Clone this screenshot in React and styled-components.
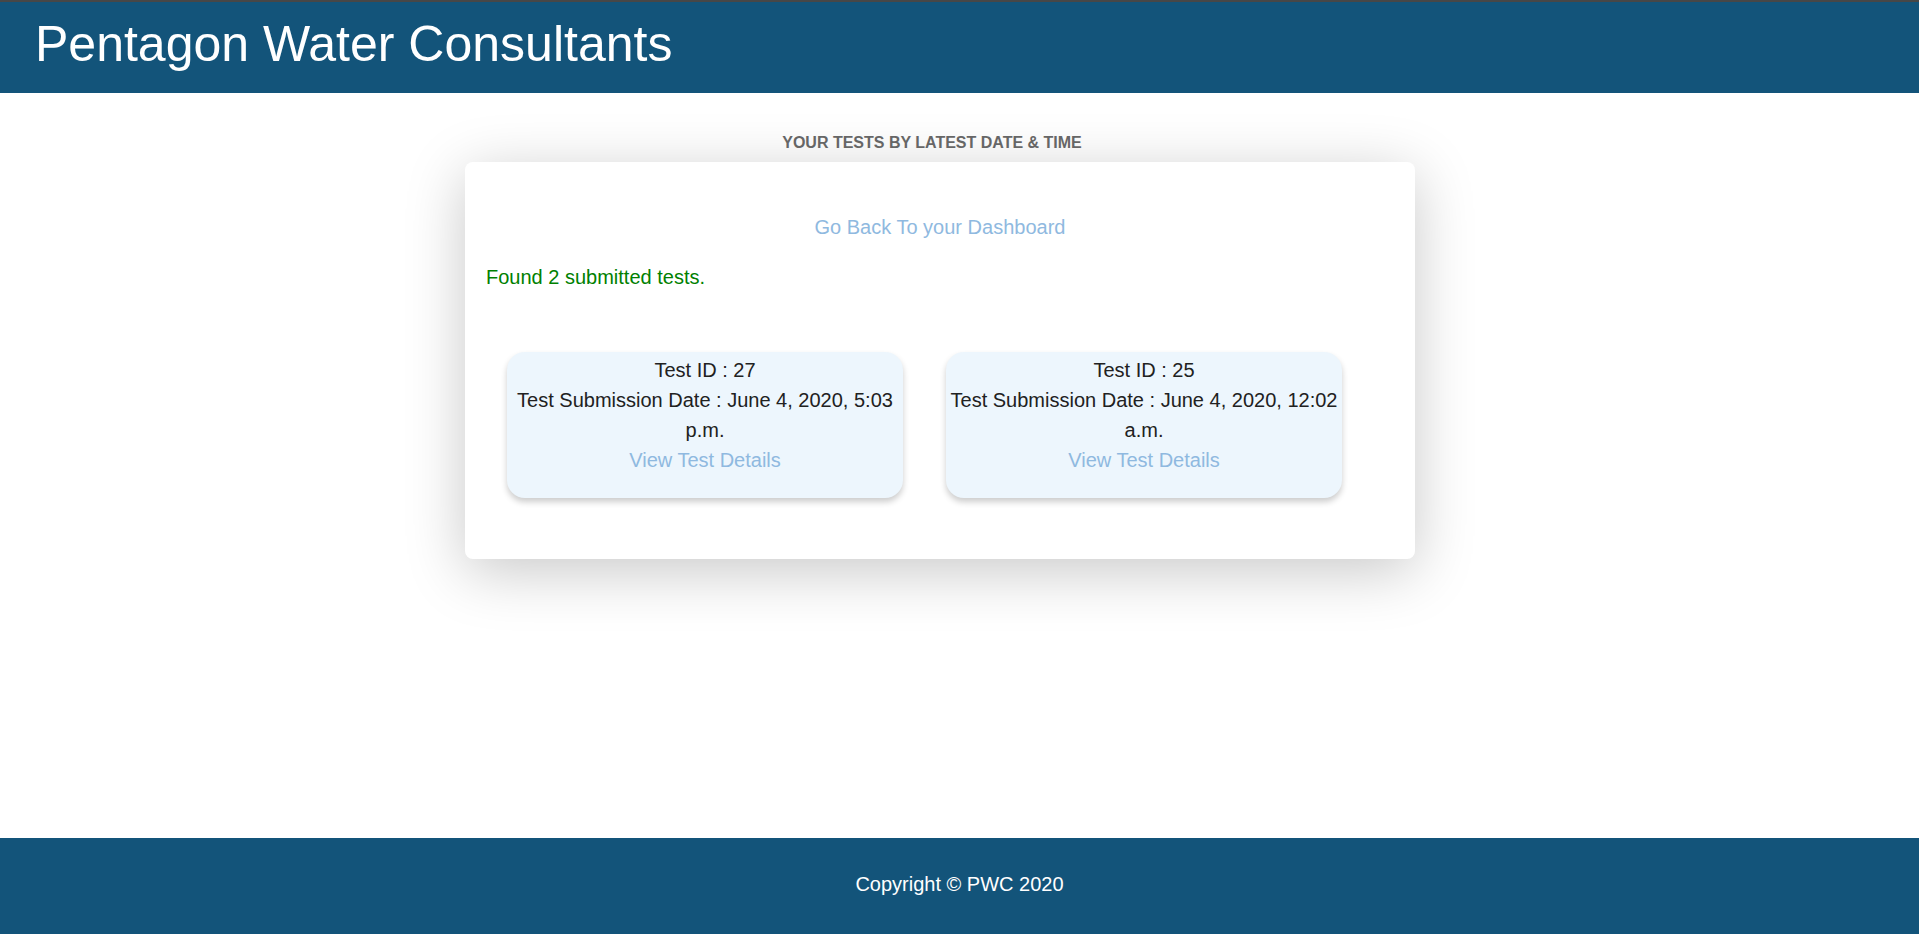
import styled, { createGlobalStyle } from "styled-components"

const GlobalStyle = createGlobalStyle`
  html, body {
    margin: 0;
    padding: 0;
    background: #ffffff;
    font-family: "Liberation Sans", Arial, sans-serif;
  }
  * {
    box-sizing: border-box;
  }
`

const tests = [
  { id: 27, date: "June 4, 2020, 5:03 p.m." },
  { id: 25, date: "June 4, 2020, 12:02 a.m." },
]

const Page = styled.div`
  min-height: 100vh;
  display: flex;
  flex-direction: column;
`

const Header = styled.header`
  background: #13547a;
  border-top: 2px solid #474747;
  height: 93px;
  display: flex;
  align-items: center;
  padding: 0 35px 8px;

  h1 {
    margin: 0;
    color: #ffffff;
    font-weight: 400;
    font-size: 50px;
  }
`

const Main = styled.main`
  flex: 1;
  padding: 41px 0 60px;
`

const Column = styled.section`
  width: 950px;
  margin-left: 465px;
`

const Title = styled.h2`
  margin: 0 0 10px;
  padding-right: 16px;
  text-align: center;
  font-size: 16px;
  line-height: 18px;
  font-weight: 700;
  color: #666666;
  text-transform: uppercase;
`

const Card = styled.div`
  background: #ffffff;
  border-radius: 8px;
  box-shadow: 0 12px 60px rgba(0, 0, 0, 0.22);
  padding: 50px 21px 41px;
  font-size: 20px;
  line-height: 30px;
`

const Link = styled.a`
  color: #8fb9e0;
  text-decoration: none;
  cursor: pointer;
`

const BackLink = styled.div`
  text-align: center;
  margin-bottom: 20px;
`

const Status = styled.p`
  margin: 0 0 40px;
  color: #008000;
`

const TestList = styled.div`
  display: flex;
  flex-wrap: wrap;
`

const TestItem = styled.div`
  width: 396px;
  margin: 20px 22px 20px 21px;
  padding: 3px 3px 23px;
  background: #edf6fd;
  border-radius: 18px;
  box-shadow: 0 4px 6px rgba(0, 0, 0, 0.2);
  text-align: center;
  color: #212121;

  p {
    margin: 0;
  }
`

const Footer = styled.footer`
  background: #13547a;
  height: 96px;
  display: flex;
  align-items: center;
  justify-content: center;
  padding-bottom: 4px;
  color: #ffffff;
  font-size: 20px;
`

function App() {
  return (
    <Page>
      <GlobalStyle />
      <Header>
        <h1>Pentagon Water Consultants</h1>
      </Header>
      <Main>
        <Column>
          <Title>Your tests by latest date &amp; time</Title>
          <Card>
            <BackLink>
              <Link>Go Back To your Dashboard</Link>
            </BackLink>
            <Status>Found {tests.length} submitted tests.</Status>
            <TestList>
              {tests.map((t) => (
                <TestItem key={t.id}>
                  <p>Test ID : {t.id}</p>
                  <p>Test Submission Date : {t.date}</p>
                  <Link>View Test Details</Link>
                </TestItem>
              ))}
            </TestList>
          </Card>
        </Column>
      </Main>
      <Footer>Copyright © PWC 2020</Footer>
    </Page>
  )
}

export default App
